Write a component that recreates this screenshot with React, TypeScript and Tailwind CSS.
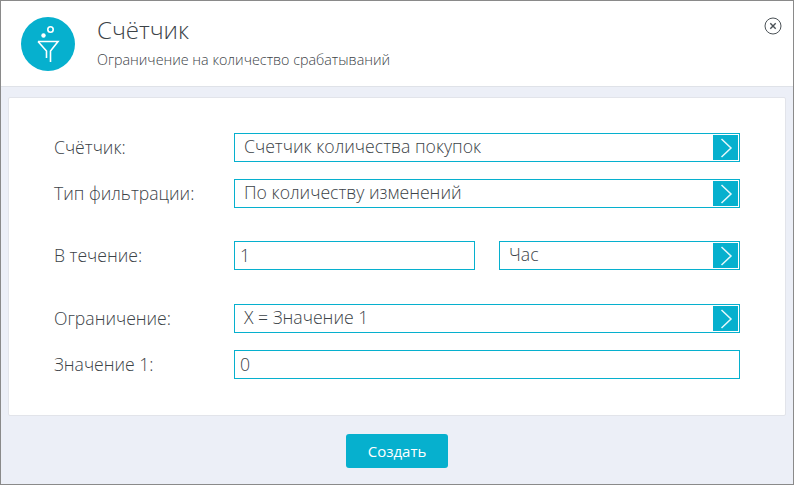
const FONT = "font-['Open_Sans','Noto_Sans',sans-serif]";

function Label({ text }: { text: string }) {
  return <div className="w-[180px] shrink-0 -mt-[2px] text-[17.6px] leading-[24px] font-light text-[#3c4348]">{text}</div>;
}

function SelectBox({ value, className }: { value: string; className?: string }) {
  return (
    <div className={"flex h-[29px] items-center justify-between border border-[#06b0ce] pr-px pl-[9px] " + (className ?? "")}>
      <span className="pb-[4px] text-[17.65px] leading-[24px] font-light text-[#3c4348]">{value}</span>
      <span className="flex h-[25px] w-[25px] items-center justify-center bg-[#06b0ce]">
        <svg viewBox="0 0 25 25" className="h-[25px] w-[25px]" fill="none" stroke="#e6f8fb" strokeWidth="1.5">
          <path d="M8.5 4l9.5 9-9.5 9" />
        </svg>
      </span>
    </div>
  );
}

function InputBox({ value, className }: { value: string; className?: string }) {
  return (
    <div className={"flex h-[29px] items-center border border-[#06b0ce] pl-[5px] " + (className ?? "")}>
      <span className="pb-[1px] text-[17.65px] leading-[24px] font-light text-[#3c4348]">{value}</span>
    </div>
  );
}

function FunnelIcon() {
  return (
    <svg viewBox="0 0 54 54" className="h-[54px] w-[54px] shrink-0">
      <circle cx="27" cy="27" r="27" fill="#06b0ce" />
      <circle cx="29.5" cy="12.5" r="2.7" fill="none" stroke="#fff" strokeWidth="1.6" />
      <circle cx="22.5" cy="18.5" r="2.2" fill="#fff" />
      <path d="M17 24.5h20l-7.5 9.5v11M25.5 41v-7L17 24.5" fill="none" stroke="#fff" strokeWidth="1.6" />
    </svg>
  );
}

export default function App() {
  return (
    <div className={"flex h-[485px] w-[794px] flex-col overflow-hidden border border-[#8a8a8a] bg-[#eceff7] " + FONT}>
      <div className="relative flex h-[86px] shrink-0 items-center gap-[22px] border-b border-[#dfe2e8] bg-white pl-[20px]">
        <FunnelIcon />
        <div className="-mt-[4px]">
          <div className="text-[24px] leading-[32px] font-light text-[#3c4348]">Счётчик</div>
          <div className="mt-[5px] text-[14.3px] leading-[18px] font-light text-[#3c4348]">Ограничение на количество срабатываний</div>
        </div>
        <svg viewBox="0 0 18 18" className="absolute top-[16px] right-[11px] h-[18px] w-[18px]" fill="none" stroke="#4b5257">
          <circle cx="9" cy="9" r="8" strokeWidth="1" />
          <path d="M6.3 6.3l5.4 5.4M11.7 6.3l-5.4 5.4" strokeWidth="1.4" />
        </svg>
      </div>

      <div className="mx-[7px] mt-[10px] flex h-[319px] flex-col rounded-[2px] border border-[#e2e4ea] bg-white pt-[35px] pl-[45px]">
        <div className="flex w-[686px] items-center">
          <Label text="Счётчик:" />
          <SelectBox value="Счетчик количества покупок" className="w-[506px]" />
        </div>
        <div className="mt-[17px] flex w-[686px] items-center">
          <Label text="Тип фильтрации:" />
          <SelectBox value="По количеству изменений" className="w-[506px]" />
        </div>
        <div className="mt-[33px] flex w-[686px] items-center">
          <Label text="В течение:" />
          <InputBox value="1" className="w-[241px]" />
          <SelectBox value="Час" className="ml-[24px] w-[241px]" />
        </div>
        <div className="mt-[34px] flex w-[686px] items-center">
          <Label text="Ограничение:" />
          <SelectBox value="X = Значение 1" className="w-[506px]" />
        </div>
        <div className="mt-[17px] flex w-[686px] items-center">
          <Label text="Значение 1:" />
          <InputBox value="0" className="w-[506px]" />
        </div>
      </div>

      <div className="flex justify-center pt-[18px]">
        <button type="button" className="h-[34px] w-[102px] rounded-[3px] bg-[#06b0ce] text-[15px] text-white">
          Создать
        </button>
      </div>
    </div>
  );
}
